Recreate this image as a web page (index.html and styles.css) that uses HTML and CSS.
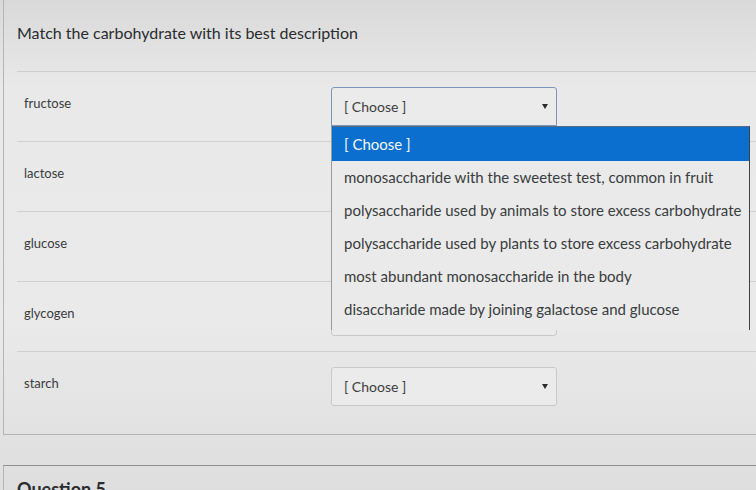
FILE: index.html
```html
<!DOCTYPE html>
<html lang="en">
  <head>
    <meta charset="UTF-8" />
    <meta name="viewport" content="width=device-width, initial-scale=1.0" />
    <title>Match the carbohydrate</title>
    <link rel="stylesheet" href="styles.css">
  </head>
  <body>
    <div class="question">
      <p class="question-text">Match the carbohydrate with its best description</p>
      <div class="answers">
        <div class="row">
          <div class="label">fructose</div>
          <div class="field">
            <div class="select open">
              <span>[ Choose ]</span>
              <span class="arrow"></span>
            </div>
            <ul class="dropdown">
              <li class="active">[ Choose ]</li>
              <li>monosaccharide with the sweetest test, common in fruit</li>
              <li>polysaccharide used by animals to store excess carbohydrate</li>
              <li>polysaccharide used by plants to store excess carbohydrate</li>
              <li>most abundant monosaccharide in the body</li>
              <li>disaccharide made by joining galactose and glucose</li>
            </ul>
          </div>
        </div>
        <!-- these three sit under the open list, so their text never shows -->
        <div class="row">
          <div class="label">lactose</div>
          <div class="field">
            <div class="select covered"><span>[ Choose ]</span><span class="arrow"></span></div>
          </div>
        </div>
        <div class="row">
          <div class="label">glucose</div>
          <div class="field">
            <div class="select covered"><span>[ Choose ]</span><span class="arrow"></span></div>
          </div>
        </div>
        <div class="row">
          <div class="label">glycogen</div>
          <div class="field">
            <div class="select covered"><span>[ Choose ]</span><span class="arrow"></span></div>
          </div>
        </div>
        <div class="row last">
          <div class="label">starch</div>
          <div class="field">
            <div class="select"><span>[ Choose ]</span><span class="arrow"></span></div>
          </div>
        </div>
      </div>
    </div>
    <div class="question next">
      <p class="question-head">Question 5</p>
    </div>
  </body>
</html>
```

FILE: styles.css
```css
html,
body {
  margin: 0;
  height: 100%;
  overflow: hidden;
}
body {
  font-family: Lato, "Open Sans", sans-serif;
  color: #2d3035;
  background: linear-gradient(180deg, #d8d9d8 0%, #e8e9e8 18%, #e9eae9 65%, #dddedd 100%);
}
.question {
  margin-left: 3px;
  width: 800px;
  border: 1px solid #b4b5b4;
  border-top: none;
  padding: 0 0 12px 13px;
}
.question-text {
  margin: 0;
  padding: 23px 0 28px 0;
  font-size: 16px;
  line-height: 20px;
  color: #2a2c30;
}
.answers {
  border-top: 1px solid #cdcecd;
}
.row {
  display: flex;
  height: 69px;
  border-bottom: 1px solid #cfd0cf;
}
.row.last {
  border-bottom: none;
  height: 70px;
}
.label {
  width: 314px;
  padding: 23px 0 0 7px;
  box-sizing: border-box;
  font-size: 13px;
  color: #3a3c40;
}
.field {
  position: relative;
  padding-top: 15px;
}
.select {
  display: flex;
  align-items: center;
  justify-content: space-between;
  width: 226px;
  height: 39px;
  box-sizing: border-box;
  padding: 0 8px 0 12px;
  border: 1px solid #c8c9c8;
  border-radius: 3px;
  background: #eaebea;
  font-size: 14px;
  color: #3c3e42;
}
.select.open {
  border: 1px solid #7c95b8;
  border-radius: 3px 3px 0 0;
}
.select.covered span:first-child {
  visibility: hidden;
}
.arrow {
  width: 0;
  height: 0;
  border-left: 3px solid transparent;
  border-right: 3px solid transparent;
  border-top: 5px solid #2a2c30;
}
.dropdown {
  position: absolute;
  top: 54px;
  left: 0;
  z-index: 5;
  width: 417px;
  margin: 0;
  padding: 0 0 4px 0;
  list-style: none;
  background: #e9eae9;
  border-left: 1px solid #9a9b9a;
  border-right: 1px solid #3f4144;
  border-top: 1px solid #5a6a80;
}
.dropdown li {
  height: 33px;
  line-height: 33px;
  padding-left: 12px;
  font-size: 15px;
  color: #3a3c40;
  white-space: nowrap;
}
.dropdown li.active {
  height: 34px;
  line-height: 34px;
  background: #0a6fcf;
  color: #f4f7fb;
}
.question.next {
  margin-top: 30px;
  border-top: 1px solid #8e8f8e;
  border-bottom: none;
  padding-top: 12px;
}
.question-head {
  margin: 0;
  font-size: 18px;
  line-height: 22px;
  font-weight: bold;
  color: #2a2c30;
}
```
